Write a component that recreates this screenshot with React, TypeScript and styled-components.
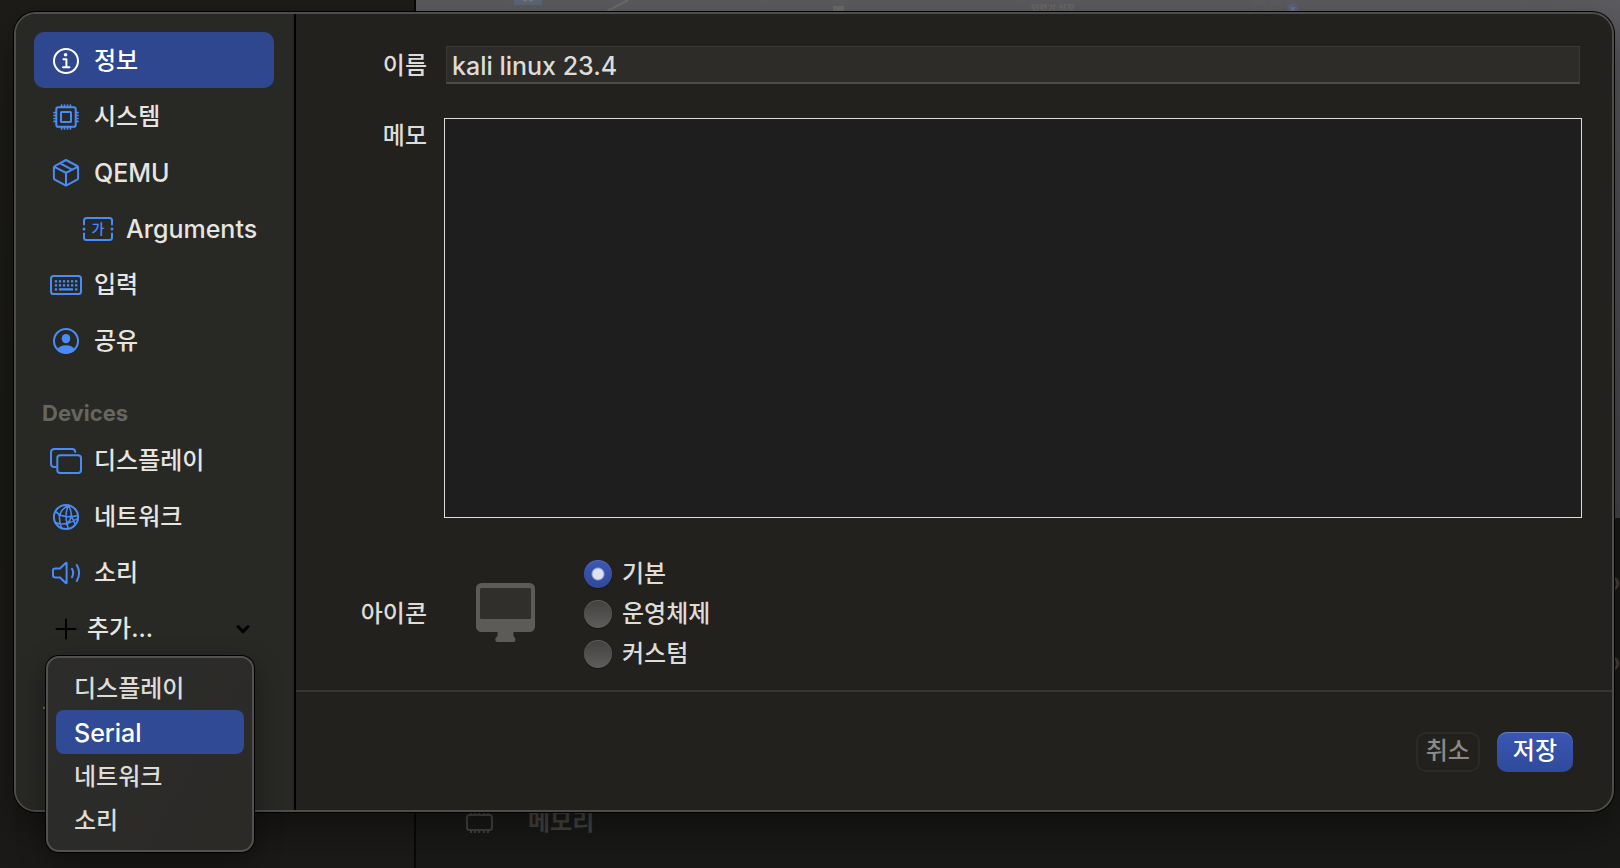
import React, { useState } from "react";
import styled, { createGlobalStyle, css } from "styled-components";

const blue = "#4a8cf7";
const accent = "#2f478f";
const textColor = "#e6e5e2";
const softText = "#dddcd9";

const GlobalStyle = createGlobalStyle`
  * { box-sizing: border-box; }
  body {
    margin: 0;
    background: #1a1a17;
    color: ${textColor};
    font-family: Inter, "Noto Sans CJK KR", sans-serif;
    font-size: 24px;
    font-weight: 500;
    line-height: 32px;
  }
  button, input, textarea { font: inherit; color: inherit; margin: 0; }
`;

const Page = styled.div`
  position: relative;
  min-height: 100vh;
  padding: 12px 6px 56px 14px;
  overflow: hidden;
`;

/* Parent window, dimmed behind the sheet */
const Backdrop = styled.div`
  position: absolute;
  inset: 0;
  display: grid;
  grid-template-columns: 416px 1fr;
`;

const BackdropSidebar = styled.div`
  background: linear-gradient(#1d1c19, #191916 50%, #1c1a18);
  border-right: 2px solid #080807;
`;

const BackdropDetail = styled.div`
  display: flex;
  flex-direction: column;
  background: #191917;
`;

const Preview = styled.svg`
  display: block;
  width: 100%;
  height: 518px;
  background: linear-gradient(#5c5c60, #47464b);
`;

const Stats = styled.dl`
  flex: 1;
  display: flex;
  flex-direction: column;
  margin: 0;
  padding: 24px 0 0 48px;
  color: #444443;
`;

const StatRow = styled.div`
  display: grid;
  grid-template-columns: 32px 1fr auto;
  align-items: center;
  column-gap: 32px;
  height: 80px;
  dt { font-weight: 700; }
  dd { grid-column: 3; margin: 0; }
`;

const Sheet = styled.section`
  position: relative;
  display: grid;
  grid-template-columns: 280px 1fr;
  min-height: calc(100vh - 68px);
  border: 2px solid #4e4d49;
  border-radius: 22px;
  background: #22211d;
  box-shadow: 0 0 0 1px #000, 0 16px 40px rgba(0, 0, 0, 0.4);
`;

const Sidebar = styled.nav`
  padding: 18px 20px 18px 18px;
  background: #282824;
  border-right: 2px solid #000;
  border-radius: 20px 0 0 20px;
`;

const rowStyles = css`
  display: flex;
  align-items: center;
  width: 100%;
  height: 56px;
  border: 0;
  border-radius: 10px;
  text-align: left;
`;

const NavButton = styled.button<{ $active?: boolean; $nested?: boolean; $latin?: boolean }>`
  ${rowStyles}
  gap: 12px;
  padding: 2px 0 0 ${(p) => (p.$nested ? 48 : 16)}px;
  font-size: ${(p) => (p.$latin ? 25 : 24)}px;
  background: ${(p) => (p.$active ? accent : "transparent")};
  color: ${(p) => (p.$active ? "#fff" : textColor)};
  svg { flex: none; color: ${(p) => (p.$active ? "#fff" : blue)}; }
`;

const GroupTitle = styled.h2`
  height: 64px;
  margin: 0;
  padding: 29px 8px 0;
  font-size: 22px;
  font-weight: 700;
  color: #666661;
`;

const AddArea = styled.div`
  position: relative;
`;

const AddButton = styled.button`
  ${rowStyles}
  gap: 5px;
  padding: 2px 24px 0 16px;
  background: transparent;
  span { flex: 1; }
  svg { flex: none; color: #000; }
`;

const Menu = styled.div`
  position: absolute;
  top: 100%;
  left: 12px;
  z-index: 1;
  width: 208px;
  padding: 8px;
  border: 2px solid #525150;
  border-radius: 13px;
  background: linear-gradient(120deg, #2c2c2b, #2b2a27);
  box-shadow: 0 0 0 1px #000, 0 10px 28px rgba(0, 0, 0, 0.4);
`;

const MenuItem = styled.button<{ $active?: boolean; $latin?: boolean }>`
  display: block;
  width: 100%;
  height: 44px;
  padding: 2px 18px 0;
  border: 0;
  border-radius: 8px;
  text-align: left;
  font-size: ${(p) => (p.$latin ? 25 : 24)}px;
  background: ${(p) => (p.$active ? "#304a95" : "transparent")};
  color: ${(p) => (p.$active ? "#fff" : softText)};
`;

const Main = styled.form`
  display: flex;
  flex-direction: column;
`;

const Fields = styled.div`
  flex: 1;
  display: grid;
  grid-template-columns: 131px 1fr;
  align-content: start;
  column-gap: 17px;
  row-gap: 34px;
  padding: 32px 30px 16px 0;
`;

const labelStyles = css`
  justify-self: end;
  color: ${softText};
`;

const FieldLabel = styled.label<{ $centered?: boolean }>`
  ${labelStyles}
  padding-top: 2px;
  align-self: ${(p) => (p.$centered ? "center" : "start")};
`;

const GroupLabel = styled.span`
  ${labelStyles}
  padding-top: 2px;
  align-self: center;
`;

const NameInput = styled.input`
  height: 38px;
  margin: 0 2px;
  padding: 2px 5px 0;
  border: 1px solid #3a3936;
  border-bottom: 2px solid #4e4d49;
  border-radius: 0;
  background: #2d2c29;
  color: ${softText};
  font-size: 25px;
  outline: none;
`;

const NotesArea = styled.textarea`
  display: block;
  width: 100%;
  height: 400px;
  padding: 4px 8px;
  border: 1px solid #dddcda;
  border-radius: 0;
  background: #1e1e1e;
  resize: none;
  outline: none;
`;

const IconChoice = styled.div`
  display: flex;
  align-items: center;
  gap: 48px;
  padding: 2px 0 0 32px;
`;

const RadioGroup = styled.div`
  display: flex;
  flex-direction: column;
`;

const RadioLabel = styled.label`
  display: flex;
  align-items: center;
  gap: 10px;
  height: 40px;
  color: ${softText};
`;

const Radio = styled.input`
  appearance: none;
  width: 28px;
  height: 28px;
  border-radius: 50%;
  background: linear-gradient(#434240, #5e5d5b);
  box-shadow: inset 0 1px 0 rgba(255, 255, 255, 0.14), 0 1px 1px rgba(0, 0, 0, 0.4);
  &:checked {
    background: radial-gradient(circle, #dde2f1 5px, transparent 7px),
      linear-gradient(#3a58b4, #31499a);
  }
`;

const Footer = styled.footer`
  display: flex;
  justify-content: flex-end;
  gap: 17px;
  padding: 40px 39px 38px;
  border-top: 2px solid #373632;
`;

const PushButton = styled.button<{ $primary?: boolean }>`
  height: 40px;
  padding: 0 ${(p) => (p.$primary ? 16 : 8)}px 2px;
  border: ${(p) => (p.$primary ? "0" : "2px solid #2c2b28")};
  border-radius: 10px;
  line-height: 32px;
  background: ${(p) => (p.$primary ? "linear-gradient(#3a57b4, #304a9a)" : "transparent")};
  color: ${(p) => (p.$primary ? "#fff" : "#8c8b88")};
  box-shadow: ${(p) => (p.$primary ? "inset 0 1px 0 rgba(255, 255, 255, 0.25)" : "none")};
`;

const Glyph = ({ children }: { children: React.ReactNode }) => (
  <svg width="32" height="32" viewBox="0 0 32 32" fill="none" stroke="currentColor" strokeWidth="2"
    strokeLinecap="round" strokeLinejoin="round" aria-hidden="true">
    {children}
  </svg>
);

const InfoIcon = () => (
  <Glyph>
    <circle cx="16" cy="16" r="12" />
    <circle cx="15.6" cy="9.8" r="1.8" fill="currentColor" stroke="none" />
    <path d="M13.4 14.200h3v8M13 22.300h6.400" />
  </Glyph>
);

const ChipIcon = () => (
  <Glyph>
    <rect x="6.3" y="6.3" width="19.4" height="19.4" rx="1.8" />
    <rect x="11" y="11" width="10" height="10" rx="0.6" />
    <path strokeWidth="1.7" d="M11.6 6V4M14.5 6V4M17.5 6V4M20.4 6V4M11.6 26v2M14.5 26v2M17.5 26v2M20.4 26v2M6 11.6H4M6 14.5H4M6 17.5H4M6 20.4H4M26 11.6h2M26 14.5h2M26 17.5h2M26 20.4h2" />
  </Glyph>
);

const BoxIcon = () => (
  <Glyph>
    <path d="M16 3 27.200 9q.9.5.9 1.400v10.800q0 .9-.9 1.400L16 28.600 4.800 22.600q-.9-.5-.9-1.400V10.400q0-.9.9-1.400zM4.400 9.800 16 15.800l11.600-6M16 15.800v12.600M10.200 6.400 22 12.600" />
  </Glyph>
);

const ArgumentsIcon = () => (
  <Glyph>
    <path d="M2 11.500V7.500Q2 5 4.500 5h23Q30 5 30 7.500v4M2 20.500v4Q2 27 4.500 27h23q2.500 0 2.500-2.500v-4" />
    <circle cx="2" cy="16" r="1.500" fill="currentColor" stroke="none" />
    <circle cx="30" cy="16" r="1.500" fill="currentColor" stroke="none" />
    <text x="16" y="21" textAnchor="middle" fontSize="14" fontWeight="500" fill="currentColor" stroke="none">가</text>
  </Glyph>
);

const KeyboardIcon = () => (
  <Glyph>
    <rect x="1" y="7" width="30" height="18" rx="2.6" />
    {[11.2, 15.2].map((y) =>
      [0, 1, 2, 3, 4, 5].map((i) => (
        <rect key={`${y}-${i}`} x={4.8 + i * 4.05} y={y} width="2.3" height="2.3" fill="currentColor" stroke="none" />
      ))
    )}
    <rect x="4.8" y="19.3" width="2.3" height="2.3" fill="currentColor" stroke="none" />
    <rect x="8.9" y="19.3" width="14.2" height="2.3" rx="0.5" fill="currentColor" stroke="none" />
    <rect x="25.05" y="19.3" width="2.3" height="2.3" fill="currentColor" stroke="none" />
  </Glyph>
);

const PersonIcon = () => (
  <Glyph>
    <circle cx="16" cy="16" r="12" />
    <ellipse cx="16" cy="13.6" rx="4.3" ry="4.7" fill="currentColor" stroke="none" />
    <path d="M7.300 24.200Q10 20.300 16 20.300t8.700 3.900Q21 28 16 28t-8.700-3.800z" fill="currentColor" stroke="none" />
  </Glyph>
);

const DisplaysIcon = () => (
  <Glyph>
    <path d="M6 22H4.500Q1 22 1 18.500v-11Q1 4 4.500 4h17.800Q25 4 25.200 7" />
    <rect x="7.3" y="10.3" width="23.7" height="17.7" rx="3" />
  </Glyph>
);

const NetworkIcon = () => (
  <Glyph>
    <circle cx="16" cy="16" r="12.1" />
    <g strokeWidth="1.5">
      <path d="M18.500 4.500Q10.500 8 9.500 16 9.200 21.500 11.500 26.800M18.500 4.500Q14.500 12 17 22.500q.6 3 1.200 5M18.500 4.500Q21.500 9 21.300 15.500q-.8 4-4.300 7M5.500 10.500q4 4 9.800 5 6 .8 12.400-1M5 21.500q5.500 2.300 12 1 5.500-1.500 9.500-4.500M21.300 15.500q2.200 3.300 3.500 7" />
    </g>
    <circle cx="17" cy="22.5" r="1.7" fill="currentColor" stroke="none" />
    <circle cx="21.4" cy="15.6" r="1.5" fill="currentColor" stroke="none" />
    <circle cx="9.6" cy="14.2" r="1.3" fill="currentColor" stroke="none" />
  </Glyph>
);

const SoundIcon = () => (
  <Glyph>
    <path d="M16.600 6.300v19.400q0 1-.9.300L10 20.600H5.300q-2.300 0-2.300-2.300v-4.600q0-2.300 2.300-2.300H10l5.700-5.400q.9-.7.9.3z" />
    <path d="M22 11.800q2.400 4.200 0 8.400M26.800 8q4.600 8 0 16" />
  </Glyph>
);

const PlusIcon = () => (
  <Glyph><path d="M16 6.500v19M6.500 16h19" /></Glyph>
);

const ChevronIcon = () => (
  <svg width="14" height="14" viewBox="0 0 14 14" fill="none" stroke="currentColor" strokeWidth="3"
    strokeLinecap="round" strokeLinejoin="round" aria-hidden="true">
    <path d="M2 4.500 7 9.800l5-5.300" />
  </svg>
);

const MonitorIcon = () => (
  <svg width="60" height="62" viewBox="0 0 60 62" aria-hidden="true">
    <rect x="0" y="0" width="59" height="49" rx="5.5" fill="#5c5b58" />
    <rect x="4" y="5" width="51" height="31" rx="1.5" fill="#302f2b" />
    <path d="M21.500 49h16v4q2 1.500 2 3.500t-1.500 2.500H21q-1.800-.5-1.800-2.500t2.300-3.500z" fill="#5c5b58" />
  </svg>
);

const MemoryIcon = () => (
  <Glyph>
    <rect x="3" y="9" width="25" height="15" rx="2.5" />
    <path d="M7 24.500V27M11 24.500V27M15 24.500V27M20 24.500V27M24 24.500V27M7 8.500V6M11 8.500V6M15 8.500V6M20 8.500V6M24 8.500V6" strokeLinecap="butt" />
  </Glyph>
);

const PreviewPicture = () => (
  <Preview aria-hidden="true">
    <rect x="98" y="0" width="28" height="5" fill="#5b6678" />
    <path d="M107 0h4M113 0h4" stroke="#7a7a72" strokeWidth="3" />
    <path d="M186 14 212 0" stroke="#6d6c6c" strokeWidth="2" />
    <rect x="417" y="6" width="11" height="10" fill="#6c6b69" />
    <text x="615" y="12" fontSize="9" fill="#6e6d6c">입력기 설정</text>
    <circle cx="844" cy="9" r="6" fill="none" stroke="#626266" />
    <circle cx="860" cy="9" r="6" fill="none" stroke="#626266" />
    <circle cx="877" cy="9" r="6" fill="#5c617a" />
    <path d="m875 7 4 4m0-4-4 4" stroke="#74758a" strokeWidth="1.5" />
  </Preview>
);

const general = [
  { id: "info", label: "정보", icon: <InfoIcon /> },
  { id: "system", label: "시스템", icon: <ChipIcon /> },
  { id: "qemu", label: "QEMU", icon: <BoxIcon />, latin: true },
  { id: "arguments", label: "Arguments", icon: <ArgumentsIcon />, latin: true, nested: true },
  { id: "input", label: "입력", icon: <KeyboardIcon /> },
  { id: "sharing", label: "공유", icon: <PersonIcon /> },
];

const devices = [
  { id: "display", label: "디스플레이", icon: <DisplaysIcon /> },
  { id: "network", label: "네트워크", icon: <NetworkIcon /> },
  { id: "sound", label: "소리", icon: <SoundIcon /> },
];

const addOptions = [
  { label: "디스플레이" },
  { label: "Serial", latin: true },
  { label: "네트워크" },
  { label: "소리" },
];

const iconStyles = ["기본", "운영체제", "커스텀"];

export default function App() {
  const [section, setSection] = useState("info");
  const [hovered, setHovered] = useState("Serial");
  const [iconStyle, setIconStyle] = useState("기본");

  return (
    <Page>
      <GlobalStyle />
      <Backdrop aria-hidden="true">
        <BackdropSidebar />
        <BackdropDetail>
          <PreviewPicture />
          <Stats>
            <StatRow><dd>o</dd></StatRow>
            <StatRow><dd>o</dd></StatRow>
            <StatRow />
            <StatRow>
              <MemoryIcon />
              <dt>메모리</dt>
            </StatRow>
          </Stats>
        </BackdropDetail>
      </Backdrop>
      <Sheet role="dialog" aria-label="정보">
        <Sidebar>
          {general.map((item) => (
            <NavButton key={item.id} type="button" $active={section === item.id} $nested={item.nested}
              $latin={item.latin} onClick={() => setSection(item.id)}>
              {item.icon}
              {item.label}
            </NavButton>
          ))}
          <GroupTitle>Devices</GroupTitle>
          {devices.map((item) => (
            <NavButton key={item.id} type="button" $active={section === item.id}
              onClick={() => setSection(item.id)}>
              {item.icon}
              {item.label}
            </NavButton>
          ))}
          <AddArea>
            <AddButton type="button" aria-haspopup="menu" aria-expanded="true">
              <PlusIcon />
              <span>추가...</span>
              <ChevronIcon />
            </AddButton>
            <Menu role="menu">
              {addOptions.map((option) => (
                <MenuItem key={option.label} type="button" role="menuitem" $latin={option.latin}
                  $active={hovered === option.label} onMouseEnter={() => setHovered(option.label)}>
                  {option.label}
                </MenuItem>
              ))}
            </Menu>
          </AddArea>
          <GroupTitle>드라이브</GroupTitle>
        </Sidebar>
        <Main onSubmit={(e) => e.preventDefault()}>
          <Fields>
            <FieldLabel htmlFor="vm-name" $centered>이름</FieldLabel>
            <NameInput id="vm-name" type="text" defaultValue="kali linux 23.4" />
            <FieldLabel htmlFor="vm-notes">메모</FieldLabel>
            <NotesArea id="vm-notes" />
            <GroupLabel id="icon-label">아이콘</GroupLabel>
            <IconChoice>
              <MonitorIcon />
              <RadioGroup role="radiogroup" aria-labelledby="icon-label">
                {iconStyles.map((style) => (
                  <RadioLabel key={style}>
                    <Radio type="radio" name="icon-style" checked={iconStyle === style}
                      onChange={() => setIconStyle(style)} />
                    {style}
                  </RadioLabel>
                ))}
              </RadioGroup>
            </IconChoice>
          </Fields>
          <Footer>
            <PushButton type="button">취소</PushButton>
            <PushButton type="submit" $primary>저장</PushButton>
          </Footer>
        </Main>
      </Sheet>
    </Page>
  );
}
